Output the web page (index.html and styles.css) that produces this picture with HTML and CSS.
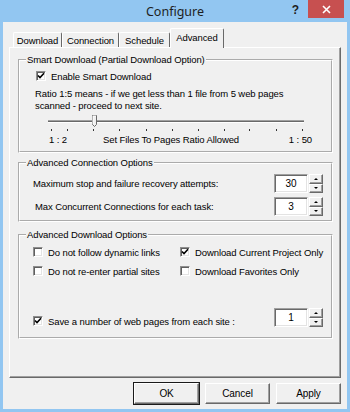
FILE: index.html
```html
<!DOCTYPE html>
<html lang="en">

<head>
    <meta charset="UTF-8">
    <title>Configure</title>
    <link rel="stylesheet" href="styles.css">
</head>

<body>

    <div class="window">
        <div class="titlebar">
            <span class="title">Configure</span>
            <div class="caption-buttons">
                <span class="help">?</span>
                <span class="close">
                    <svg width="9" height="9" viewBox="0 0 9 9"><path d="M1 1 L8 8 M8 1 L1 8" stroke="#fff" stroke-width="1.6"/></svg>
                </span>
            </div>
        </div>

        <div class="client">
            <div class="tabs">
                <span class="tab tab-download">Download</span>
                <span class="tab tab-connection">Connection</span>
                <span class="tab tab-schedule">Schedule</span>
                <span class="tab tab-advanced selected">Advanced</span>
            </div>

            <div class="panel">
                <!-- smart download -->
                <fieldset class="group group-smart">
                    <legend>Smart Download (Partial Download Option)</legend>
                    <div class="check check-smart">
                        <span class="box checked"><svg width="8" height="8" viewBox="0 0 8 8"><path d="M1 3.5 L3 5.5 L7 1.2" fill="none" stroke="#000" stroke-width="1.6"/></svg></span>
                        Enable Smart Download
                    </div>
                    <p class="ratio">Ratio 1:5 means - if we get less than 1 file from 5 web pages<br>scanned - proceed to next site.</p>
                    <svg class="slider" width="311" height="21" viewBox="0 0 311 21">
                        <rect x="28" y="8" width="256" height="1" fill="#a0a0a0"/>
                        <rect x="28" y="9" width="256" height="1" fill="#696969"/>
                        <rect x="28" y="10" width="256" height="1" fill="#fff"/>
                        <g fill="#333">
                            <rect x="31" y="17" width="1" height="2"/>
                            <rect x="47" y="17" width="1" height="2"/>
                            <rect x="73" y="17" width="1" height="2"/>
                            <rect x="99" y="17" width="1" height="2"/>
                            <rect x="126" y="17" width="1" height="2"/>
                            <rect x="152" y="17" width="1" height="2"/>
                            <rect x="178" y="17" width="1" height="2"/>
                            <rect x="204" y="17" width="1" height="2"/>
                            <rect x="229" y="17" width="1" height="2"/>
                            <rect x="256" y="17" width="1" height="2"/>
                            <rect x="282" y="17" width="1" height="2"/>
                        </g>
                        <path d="M72.5 3.5 H76.5 V12.5 L74.5 14.5 L72.5 12.5 Z" fill="#f0f0f0" stroke="#696969"/>
                        <path d="M73 4 H76 M73 4 V12" stroke="#fff"/>
                    </svg>
                    <div class="slider-labels">
                        <span class="lbl-min">1 : 2</span>
                        <span class="lbl-mid">Set Files To Pages Ratio Allowed</span>
                        <span class="lbl-max">1 : 50</span>
                    </div>
                </fieldset>

                <!-- connection -->
                <fieldset class="group group-conn">
                    <legend>Advanced Connection Options</legend>
                    <div class="spin-row row-first">
                        <span class="spin-label">Maximum stop and failure recovery attempts:</span>
                        <span class="field">30</span>
                        <span class="spin"><span class="spin-btn"><i class="arrow up"></i></span><span class="spin-btn"><i class="arrow down"></i></span></span>
                    </div>
                    <div class="spin-row row-second">
                        <span class="spin-label indent">Max Concurrent Connections for each task:</span>
                        <span class="field">3</span>
                        <span class="spin"><span class="spin-btn"><i class="arrow up"></i></span><span class="spin-btn"><i class="arrow down"></i></span></span>
                    </div>
                </fieldset>

                <!-- download options -->
                <fieldset class="group group-dl">
                    <legend>Advanced Download Options</legend>
                    <div class="check-grid">
                        <div class="check"><span class="box"></span>Do not follow dynamic links</div>
                        <div class="check"><span class="box checked"><svg width="8" height="8" viewBox="0 0 8 8"><path d="M1 3.5 L3 5.5 L7 1.2" fill="none" stroke="#000" stroke-width="1.6"/></svg></span>Download Current Project Only</div>
                        <div class="check"><span class="box"></span>Do not re-enter partial sites</div>
                        <div class="check"><span class="box"></span>Download Favorites Only</div>
                    </div>
                    <div class="spin-row row-save">
                        <div class="check spin-label"><span class="box checked"><svg width="8" height="8" viewBox="0 0 8 8"><path d="M1 3.5 L3 5.5 L7 1.2" fill="none" stroke="#000" stroke-width="1.6"/></svg></span>Save a number of web pages from each site :</div>
                        <span class="field">1</span>
                        <span class="spin"><span class="spin-btn"><i class="arrow up"></i></span><span class="spin-btn"><i class="arrow down"></i></span></span>
                    </div>
                </fieldset>
            </div>

            <div class="buttons">
                <span class="btn default">OK</span>
                <span class="btn">Cancel</span>
                <span class="btn">Apply</span>
            </div>
        </div>
    </div>

</body>

</html>
```

FILE: styles.css
```css
* {
    box-sizing: border-box;
}

body {
    margin: 0;
    font-family: "Liberation Sans", Arial, sans-serif;
    font-size: 9.5px;
    letter-spacing: -0.1px;
    color: #000;
}

.window {
    width: 350px;
    height: 412px;
    background: #92c6f1; /* win8 frame */
    display: flex;
    flex-direction: column;
    overflow: hidden;
}

/* title bar */
.titlebar {
    height: 22px;
    display: grid;
    grid-template-columns: 1fr auto 1fr;
}

.title {
    grid-column: 2;
    font-family: "Noto Sans", sans-serif;
    font-size: 12.5px;
    line-height: 23px;
    letter-spacing: 0;
    color: #1e1e1e;
}

.caption-buttons {
    grid-column: 3;
    display: flex;
    justify-content: flex-end;
    align-items: flex-start;
    padding-right: 6px;
}

.help {
    font-weight: bold;
    font-size: 12px;
    line-height: 12px;
    margin: 4px 9px 0 0;
    color: #1e1e1e;
}

.close {
    width: 36px;
    height: 18px;
    background: #c75050;
    display: flex;
    align-items: center;
    justify-content: center;
}

/* client area */
.client {
    flex: 1;
    margin: 0 3px 3px;
    background: #f0f0f0;
    display: flex;
    flex-direction: column;
    padding-top: 6px;
}

.tabs {
    display: flex;
    align-items: flex-end;
    height: 20px;
    padding-left: 10px;
    position: relative;
    z-index: 1;
}

.tab {
    height: 15px;
    margin-bottom: 1px;
    border: 1px solid;
    border-color: #fff #696969 transparent #fff;
    border-bottom: 0;
    border-radius: 2px 2px 0 0;
    display: flex;
    align-items: center;
    justify-content: center;
    background: #f0f0f0;
}

.tab-download { width: 49px; }
.tab-connection { width: 57px; }
.tab-schedule { width: 51px; }
.tab-advanced { width: 54px; }

.tab.selected {
    height: 20px;
    margin-bottom: 0;
    padding-bottom: 3px;
}

.panel {
    height: 331px;
    margin: -1px 6px 0;
    border: 1px solid;
    border-color: #fff #696969 #696969 #fff;
    box-shadow: inset -1px -1px 0 #a0a0a0;
    padding: 6px 7px 0 8px;
}

/* group boxes */
.group {
    margin: 0;
    padding: 0;
    border: 2px groove #fff;
    min-inline-size: 0;
}

.group legend {
    margin-left: 6px;
    padding: 0 1px;
    line-height: 12px;
}

.group-smart { height: 99px; }
.group-conn { height: 65px; margin-top: 4px; }
.group-dl { height: 110px; margin-top: 7px; }

.check {
    display: flex;
    align-items: center;
    height: 12px;
    white-space: nowrap;
}

.box {
    width: 10px;
    height: 10px;
    flex: none;
    margin-right: 5px;
    background: #fff;
    border: 1px solid;
    border-color: #8e8e8e #fff #fff #8e8e8e;
    box-shadow: inset 1px 1px 0 #5f5f5f, inset -1px -1px 0 #e3e3e3;
    display: flex;
    align-items: center;
    justify-content: center;
}

.check-smart {
    margin: 4px 0 0 16px;
}

.ratio {
    margin: 6px 0 0 15px;
    line-height: 12px;
}

.slider {
    display: block;
}

.slider-labels {
    display: flex;
    height: 12px;
    line-height: 12px;
    margin-top: 1px;
    padding-left: 29px;
}

.lbl-mid { margin-left: 36px; }
.lbl-max { margin-left: auto; margin-right: 19px; }

/* spin rows */
.spin-row {
    display: flex;
    align-items: center;
    padding: 0 8px 0 13px;
    height: 19px;
}

.row-first { margin-top: 5px; }
.row-second { margin-top: 4px; }

.spin-label {
    flex: 1;
}

.spin-label.indent {
    padding-left: 2px;
}

.field {
    width: 34px;
    height: 19px;
    background: #fff;
    border: 1px solid;
    border-color: #a0a0a0 #fff #fff #a0a0a0;
    box-shadow: inset 1px 1px 0 #696969, inset -1px -1px 0 #e3e3e3;
    text-align: center;
    line-height: 17px;
    font-size: 10px;
}

.spin {
    width: 14px;
    height: 19px;
    margin-left: 1px;
    display: flex;
    flex-direction: column;
}

.spin-btn {
    flex: 1;
    border: 1px solid;
    border-color: #fff #696969 #696969 #fff;
    box-shadow: inset -1px -1px 0 #a0a0a0;
    display: flex;
    align-items: center;
    justify-content: center;
}

.arrow {
    width: 0;
    height: 0;
    border-left: 2px solid transparent;
    border-right: 2px solid transparent;
}

.arrow.up { border-bottom: 2px solid #000; }
.arrow.down { border-top: 2px solid #000; }

.check-grid {
    display: grid;
    grid-template-columns: 147px auto;
    row-gap: 7px;
    margin: 5px 0 0 13px;
}

.row-save {
    margin-top: 31px;
    align-items: flex-end;
}

.row-save .check {
    margin-bottom: 0;
}

/* dialog buttons */
.buttons {
    display: flex;
    justify-content: flex-end;
    gap: 6px;
    margin-top: 5px;
    padding-right: 6px;
}

.btn {
    width: 65px;
    height: 21px;
    border: 1px solid;
    border-color: #fff #696969 #696969 #fff;
    box-shadow: inset -1px -1px 0 #a0a0a0;
    display: flex;
    align-items: center;
    justify-content: center;
    font-size: 10px;
}

.btn.default {
    outline: 1px solid #1a1a1a;
    outline-offset: 0;
}
```
